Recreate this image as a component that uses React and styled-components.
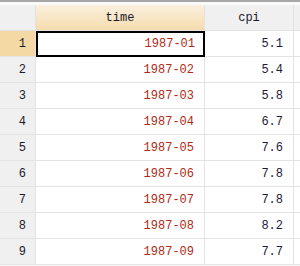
import React from 'react'
import styled, { createGlobalStyle } from 'styled-components'

const Global = createGlobalStyle`
  body {
    margin: 0;
    background: #ffffff;
    font-family: "Liberation Mono", "Courier New", monospace;
  }
`

const Frame = styled.div`
  width: 300px;
  height: 266px;
  overflow: hidden;
  background: #fafafa;
  border-top: 2px solid #a6a6a6;
  box-sizing: border-box;
  padding-top: 3px;
`

const Grid = styled.div`
  display: grid;
  grid-template-columns: 35px 168px 88px 20px;
  grid-auto-rows: 25px;
  gap: 1px;
  background: #e3e3e3;
  padding-bottom: 1px;
`

const Head = styled.div`
  display: flex;
  align-items: center;
  justify-content: center;
  font-size: 12px;
  color: #1a1a2a;
  background: ${p => (p.$active ? 'linear-gradient(#fbf0de, #f4dcae)' : '#f0f0f0')};
`

const RowNum = styled.div`
  display: flex;
  align-items: center;
  justify-content: flex-end;
  padding-right: 9px;
  font-size: 12px;
  color: #1a1a2a;
  background: ${p => (p.$active ? '#f4d9a4' : '#f0f0f0')};
`

const Cell = styled.div`
  display: flex;
  align-items: center;
  justify-content: flex-end;
  padding-right: 10px;
  font-size: 12px;
  background: #ffffff;
  color: ${p => (p.$str ? '#b02a14' : '#1a1a3a')};
  box-shadow: ${p => (p.$sel ? 'inset 0 0 0 2px #000' : 'none')};
  margin: ${p => (p.$sel ? '0 -1px -1px 0' : '0')};
`

const Filler = styled.div`
  background: #ffffff;
`

const rows = [
  ['1987-01', '5.1'],
  ['1987-02', '5.4'],
  ['1987-03', '5.8'],
  ['1987-04', '6.7'],
  ['1987-05', '7.6'],
  ['1987-06', '7.8'],
  ['1987-07', '7.8'],
  ['1987-08', '8.2'],
  ['1987-09', '7.7'],
]

export default function App() {
  return (
    <Frame>
      <Global />
      <Grid>
        <Head />
        <Head $active>time</Head>
        <Head>cpi</Head>
        <Head />
        {rows.map(([t, c], i) => (
          <React.Fragment key={t}>
            <RowNum $active={i === 0}>{i + 1}</RowNum>
            <Cell $str $sel={i === 0}>{t}</Cell>
            <Cell>{c}</Cell>
            <Filler />
          </React.Fragment>
        ))}
      </Grid>
    </Frame>
  )
}
